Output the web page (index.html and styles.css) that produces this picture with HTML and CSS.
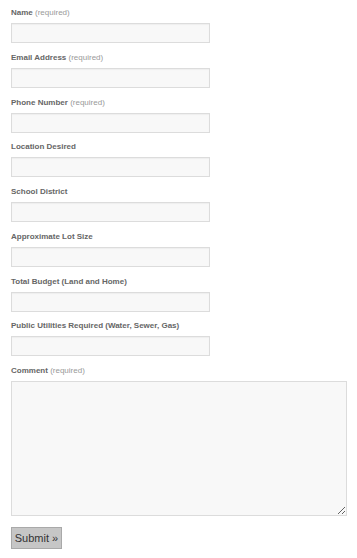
FILE: index.html
```html
<!DOCTYPE html>
<html lang="en">
<head>
    <meta charset="UTF-8">
    <meta name="viewport" content="width=device-width, initial-scale=1.0">
    <title>Contact</title>
    <link rel="stylesheet" href="styles.css">
</head>
<body>

    <form class="contact-form">
        <div class="form-group">
            <label for="name">Name <span class="req">(required)</span></label>
            <input type="text" id="name" name="name">
        </div>
        <div class="form-group">
            <label for="email">Email Address <span class="req">(required)</span></label>
            <input type="text" id="email" name="email">
        </div>
        <div class="form-group">
            <label for="phone">Phone Number <span class="req">(required)</span></label>
            <input type="text" id="phone" name="phone">
        </div>
        <div class="form-group">
            <label for="location">Location Desired</label>
            <input type="text" id="location" name="location">
        </div>
        <div class="form-group">
            <label for="district">School District</label>
            <input type="text" id="district" name="district">
        </div>
        <div class="form-group">
            <label for="lot">Approximate Lot Size</label>
            <input type="text" id="lot" name="lot">
        </div>
        <div class="form-group">
            <label for="budget">Total Budget (Land and Home)</label>
            <input type="text" id="budget" name="budget">
        </div>
        <div class="form-group">
            <label for="utilities">Public Utilities Required (Water, Sewer, Gas)</label>
            <input type="text" id="utilities" name="utilities">
        </div>
        <div class="form-group">
            <label for="comment">Comment <span class="req">(required)</span></label>
            <textarea id="comment" name="comment"></textarea>
        </div>
        <div class="form-actions">
            <button type="submit">Submit &raquo;</button>
        </div>
    </form>

</body>
</html>
```

FILE: styles.css
```css
body {
    font-family: "Liberation Sans", Arial, sans-serif;
    margin: 0;
    padding: 7px 10px 0 11px;
    background: #fff;
}
.form-group {
    margin-bottom: 8.75px;
}
.form-group label {
    display: block;
    font-size: 8px;
    line-height: 12px;
    font-weight: bold;
    color: #666;
    margin-bottom: 4px;
}
.form-group .req {
    font-weight: normal;
    color: #999;
}
.form-group input {
    display: block;
    box-sizing: border-box;
    width: 199px;
    height: 20px;
    margin: 0;
    border: 1px solid #dcdcdc;
    background-color: #f8f8f8;
    box-shadow: inset 0 1px 1px rgba(0, 0, 0, 0.04);
}
.form-group textarea {
    display: block;
    box-sizing: border-box;
    width: 336px;
    height: 135px;
    margin: 0;
    border: 1px solid #dcdcdc;
    background-color: #f8f8f8;
}
.form-actions {
    margin-top: 11px;
}
.form-actions button {
    font-family: "Liberation Sans", Arial, sans-serif;
    font-size: 11px;
    color: #333;
    height: 22px;
    width: 51px;
    padding: 0;
    background-color: #c6c6c6;
    border: 1px solid #a9a9a9;
    border-radius: 0;
}
```
